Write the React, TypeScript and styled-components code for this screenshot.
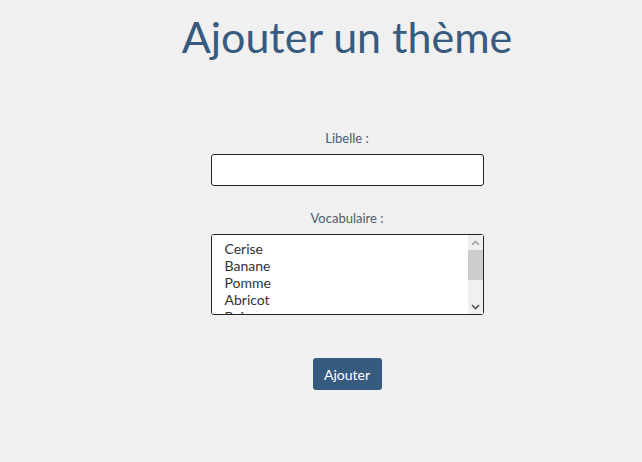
import React from "react";
import styled, { createGlobalStyle } from "styled-components";

const Global = createGlobalStyle`
  html, body { margin: 0; padding: 0; background: #f0f0f0; }
  body { font-family: Lato, "Noto Sans", sans-serif; }
`;

const Page = styled.div`
  width: 642px;
  height: 462px;
  display: flex;
  flex-direction: column;
  align-items: center;
  padding-left: 52px;
  box-sizing: border-box;
`;

const Title = styled.h1`
  margin: 11px 0 0;
  font-size: 43px;
  font-weight: 400;
  color: #375a7f;
  line-height: 52px;
`;

const Form = styled.form`
  margin-top: 67px;
  display: flex;
  flex-direction: column;
  align-items: center;
`;

const Label = styled.label<{ $gap?: number }>`
  display: block;
  font-size: 13px;
  color: #4e5d6c;
  line-height: 16px;
  margin-top: ${(p) => p.$gap ?? 0}px;
  margin-bottom: 8px;
`;

const Input = styled.input`
  width: 273px;
  height: 32px;
  box-sizing: border-box;
  border: 1px solid #222;
  border-radius: 3px;
  background: #fff;
  font-family: inherit;
  font-size: 14px;
  outline: none;
`;

const ListWrap = styled.div`
  position: relative;
  width: 273px;
  height: 81px;
`;

const Select = styled.select`
  width: 273px;
  height: 81px;
  box-sizing: border-box;
  border: 1px solid #222;
  border-radius: 3px;
  background: #fff;
  font-family: Lato, sans-serif;
  font-size: 14px;
  color: #333;
  padding: 5px 0 0 13px;
  outline: none;
  option { padding: 0; line-height: 16.5px; }
`;

const ScrollTrack = styled.div`
  position: absolute;
  top: 1px;
  right: 1px;
  bottom: 1px;
  width: 15px;
  background: #f0f0f0;
  pointer-events: none;
  display: flex;
  flex-direction: column;
`;

const ScrollBtn = styled.div`
  height: 15px;
  display: flex;
  align-items: center;
  justify-content: center;
  flex: none;
`;

const Thumb = styled.div`
  height: 30px;
  background: #cdcdcd;
  flex: none;
`;

const Spacer = styled.div`
  flex: 1;
`;

const Button = styled.button`
  margin-top: 43px;
  width: 69px;
  height: 32px;
  border: none;
  border-radius: 3px;
  background: #375a7f;
  color: #fff;
  font-family: Lato, sans-serif;
  font-size: 14px;
  cursor: pointer;
`;

const items = ["Cerise", "Banane", "Pomme", "Abricot", "Poire", "Fraise", "Kiwi", "Orange", "Raisin", "Mangue"];

export default function App() {
  return (
    <Page>
      <Global />
      <Title>Ajouter un thème</Title>
      <Form onSubmit={(e) => e.preventDefault()}>
        <Label htmlFor="libelle">Libelle :</Label>
        <Input id="libelle" type="text" />
        <Label htmlFor="vocab" $gap={24}>Vocabulaire :</Label>
        <ListWrap>
          <Select id="vocab" multiple>
            {items.map((i) => (
              <option key={i} value={i}>{i}</option>
            ))}
          </Select>
          <ScrollTrack>
            <ScrollBtn>
              <svg width="9" height="6" viewBox="0 0 9 6">
                <path d="M1 5 L4.5 1.5 L8 5" fill="none" stroke="#a3a3a3" strokeWidth="1.6" />
              </svg>
            </ScrollBtn>
            <Thumb />
            <Spacer />
            <ScrollBtn>
              <svg width="9" height="6" viewBox="0 0 9 6">
                <path d="M1 1 L4.5 4.5 L8 1" fill="none" stroke="#505050" strokeWidth="1.6" />
              </svg>
            </ScrollBtn>
          </ScrollTrack>
        </ListWrap>
        <Button type="submit">Ajouter</Button>
      </Form>
    </Page>
  );
}
